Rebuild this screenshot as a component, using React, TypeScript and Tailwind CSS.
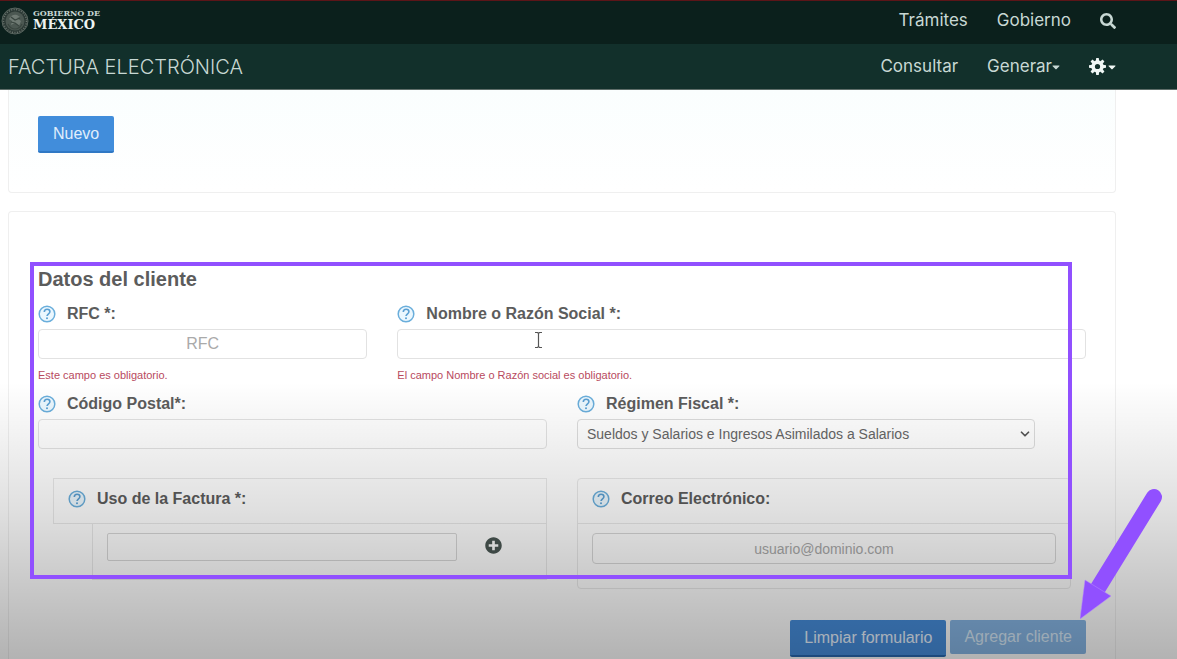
import React from 'react';
import { FaCaretDown, FaPlusCircle, FaSearch } from 'react-icons/fa';
import { ChevronDown } from 'lucide-react';

const teeth = [0, 45, 90, 135, 180, 225, 270, 315];

const GearIcon: React.FC = () => (
  <svg viewBox="0 0 24 24" className="w-[17px] h-[17px]" aria-hidden="true">
    <circle cx="12" cy="12" r="6.2" fill="none" stroke="currentColor" strokeWidth="5" />
    {teeth.map((angle) => (
      <path key={angle} d="M9.6 4.5 L10.2 0 H13.8 L14.4 4.5 Z" fill="currentColor" transform={`rotate(${angle} 12 12)`} />
    ))}
  </svg>
);

const HelpIcon: React.FC = () => (
  <svg viewBox="0 0 18 18" className="w-[18px] h-[18px] shrink-0" aria-hidden="true">
    <circle cx="9" cy="9" r="7.8" fill="#e2f4fd" fillOpacity="0.7" stroke="#6aaedb" strokeWidth="1.5" />
    <path d="M6.3 7c0-1.700 1.100-2.800 2.800-2.800s2.800 1 2.800 2.500c0 1.900-2.700 2.200-2.900 4.300" fill="none" stroke="#5a9fd2" strokeWidth="1.600" />
    <circle cx="9" cy="13.200" r="1" fill="#5a9fd2" />
  </svg>
);

const Seal: React.FC = () => (
  <svg viewBox="0 0 28 28" className="w-7 h-7" aria-hidden="true">
    <circle cx="14" cy="14" r="13" fill="#2c3935" stroke="#59655f" strokeWidth="1" />
    <circle cx="14" cy="14" r="11.500" fill="none" stroke="#6b766f" strokeWidth="1.5" strokeDasharray="1 1.500" />
    <circle cx="14" cy="14" r="9.500" fill="#4c5852" />
    <path d="M8 12c2-4 5-5 8-4l3 2-3 1 4 3-2 5-4-3-4 2 1-4-3-2z" fill="#6f7a73" />
    <path d="M7 17c2 4 5 5 7 5s5-1 7-5M10 10l4 3 5-2M10 15l4 1 4 3" fill="none" stroke="#39453f" strokeWidth="1.200" />
  </svg>
);

interface FieldLabelProps {
  htmlFor: string;
  children: React.ReactNode;
}

const FieldLabel: React.FC<FieldLabelProps> = ({ htmlFor, children }) => (
  <label htmlFor={htmlFor} className="flex items-center gap-[11px] h-[30px] text-base font-bold text-[#5c5c5c]">
    <HelpIcon />
    <span>{children}</span>
  </label>
);

const inputClass =
  'block w-full h-[30px] px-2.5 text-base text-[#666] text-center bg-white/40 border border-[#e2e2e2] rounded-sm placeholder:text-[#aaa]';

const App: React.FC = () => {
  return (
    <div className="relative flex flex-col min-h-screen bg-white font-['Liberation_Sans',Arial,sans-serif]">
      <header className="font-['Inter','Open_Sans',sans-serif] text-[17px] text-[#c8d8d4] border-b border-[#5f6e6a]">
        {/* Government bar */}
        <div className="flex items-center justify-between h-11 pl-px pr-[61px] pb-1 bg-[#0b201c] border-t border-[#5c1518]">
          <a href="#inicio" className="flex items-center gap-1 font-['DejaVu_Serif',serif] font-bold">
            <Seal />
            <span className="flex flex-col">
              <span className="text-[8px] leading-[9px]">GOBIERNO DE</span>
              <span className="text-[13px] leading-[14px] text-[#eef4f2]">MÉXICO</span>
            </span>
          </a>
          <nav className="flex items-center gap-[29px]">
            <a href="#tramites">Trámites</a>
            <a href="#gobierno">Gobierno</a>
            <button type="button" aria-label="Buscar">
              <FaSearch className="w-4 h-4" />
            </button>
          </nav>
        </div>

        {/* Application bar */}
        <div className="flex items-center justify-between h-[45px] pl-2 pr-[61px] bg-[#12302b]">
          <h1 className="text-xl font-light">FACTURA ELECTRÓNICA</h1>
          <nav className="flex items-center gap-[29px]">
            <a href="#consultar">Consultar</a>
            <button type="button" className="flex items-center">
              Generar
              <FaCaretDown className="w-2 h-3" />
            </button>
            <button type="button" aria-label="Ajustes" className="flex items-center gap-0.5 text-[#f0f7f5]">
              <GearIcon />
              <FaCaretDown className="w-2 h-3" />
            </button>
          </nav>
        </div>
      </header>

      <main className="flex flex-col flex-1 gap-[18px] pl-2 pr-[61px]">
        <section className="px-[29px] pt-[26px] pb-[39px] border border-t-0 border-[#efefef] rounded-b bg-linear-to-b from-[#fafefe] to-white">
          <button type="button" className="h-[37px] px-[15px] text-base text-[#e0eefc] bg-[#418ddb] border-b-2 border-[#2f78c4] rounded-xs">
            Nuevo
          </button>
        </section>

        <section className="flex-1 px-[29px] pt-[55px] pb-0.5 border border-b-0 border-[#efefef] rounded-t">
          <form className="relative">
            <h2 className="h-8 text-xl leading-6 font-bold text-[#5c5c5c]">Datos del cliente</h2>

            <div className="grid grid-cols-12 gap-x-[30px]">
              <div className="col-span-4">
                <FieldLabel htmlFor="rfc">RFC *:</FieldLabel>
                <input id="rfc" type="text" placeholder="RFC" className={inputClass} />
                <p className="h-[30px] text-[11px] leading-8 text-[#b84a5e]">Este campo es obligatorio.</p>
              </div>
              <div className="col-span-8">
                <FieldLabel htmlFor="nombre">Nombre o Razón Social *:</FieldLabel>
                <div className="relative">
                  <input id="nombre" type="text" className={inputClass} />
                  {/* Text cursor */}
                  <svg viewBox="0 0 9 18" className="absolute left-[137px] top-0.5 w-[9px] h-[18px]" aria-hidden="true">
                    <path d="M1 1.500h2.500l1 1 1-1H8M4.500 2v14M1 16.500h2.500l1-1 1 1H8" fill="none" stroke="#555" strokeWidth="1.200" />
                  </svg>
                </div>
                <p className="h-[30px] text-[11px] leading-8 text-[#b84a5e]">
                  El campo Nombre o Razón social es obligatorio.
                </p>
              </div>

              <div className="col-span-6">
                <FieldLabel htmlFor="codigo-postal">Código Postal*:</FieldLabel>
                <input id="codigo-postal" type="text" className={inputClass} />
              </div>
              <div className="col-span-6">
                <FieldLabel htmlFor="regimen">Régimen Fiscal *:</FieldLabel>
                <div className="relative w-9/10">
                  <select
                    id="regimen"
                    className="block w-full h-[30px] px-[9px] text-sm text-[#666] bg-white/40 border border-[#dcdcdc] rounded-sm appearance-none"
                  >
                    <option>Sueldos y Salarios e Ingresos Asimilados a Salarios</option>
                  </select>
                  <ChevronDown className="absolute right-[3px] top-2 w-3.5 h-3.5 text-[#555] pointer-events-none" strokeWidth={3} />
                </div>
              </div>
            </div>

            <div className="grid grid-cols-2 gap-x-[30px] pt-[29px]">
              {/* Invoice use */}
              <div className="flex flex-col ml-[15px] h-[102px] border-r border-[#e9e9e9]">
                <div className="px-3.5 pt-[5px] pb-[9px] border border-r-0 border-[#e9e9e9]">
                  <FieldLabel htmlFor="uso">Uso de la Factura *:</FieldLabel>
                </div>
                <div className="flex flex-1 items-start ml-[39px] pl-3.5 pt-[9px] border-l border-b border-[#e9e9e9]">
                  <input id="uso" type="text" className="w-[350px] h-7 px-2 bg-transparent border border-[#d8d8d8] rounded-xs" />
                  <button type="button" aria-label="Agregar uso" className="ml-7 mt-1">
                    <FaPlusCircle className="w-[17px] h-[17px] text-[#4a5753]" />
                  </button>
                </div>
              </div>

              {/* Email */}
              <div className="mr-[15px] h-[111px] border border-[#e9e9e9] rounded-sm">
                <div className="px-3.5 pt-[5px] pb-[9px] border-b border-[#e9e9e9]">
                  <FieldLabel htmlFor="correo">Correo Electrónico:</FieldLabel>
                </div>
                <div className="px-3.5 pt-[9px]">
                  <input
                    id="correo"
                    type="email"
                    placeholder="usuario@dominio.com"
                    className="block w-full h-[31px] px-2.5 text-sm text-center bg-transparent border border-[#d8d8d8] rounded-sm placeholder:text-[#aaa]"
                  />
                </div>
              </div>
            </div>

            <div className="flex items-start justify-end gap-1 pt-[31px]">
              <button type="button" className="h-[37px] px-3.5 text-base text-[#e8f3ff] bg-[#468ddb] border-b-2 border-[#2868b0] rounded-xs">
                Limpiar formulario
              </button>
              <button type="button" className="h-[34px] px-3.5 text-base text-[#d7e9f8] bg-[#86b5e4] rounded-xs">
                Agregar cliente
              </button>
            </div>

            {/* Annotations */}
            <div className="absolute z-20 -left-2 right-3.5 -top-[5px] bottom-[78px] border-4 border-[#9150ff] pointer-events-none" />
            <svg viewBox="0 0 83 132" className="absolute z-20 -right-[77px] bottom-[37px] w-[83px] h-[132px] pointer-events-none" aria-hidden="true">
              <path d="M74 9 L18 100" stroke="#9150ff" strokeWidth="16" strokeLinecap="round" />
              <path d="M0 131 L5 92 L31 108 Z" fill="#9150ff" stroke="#b78bff" strokeWidth="0.500" />
            </svg>
          </form>
        </section>
      </main>

      {/* Bottom shade */}
      <div className="absolute z-10 inset-x-0 bottom-0 h-[42%] pointer-events-none bg-linear-to-b from-black/0 via-black/12 via-45% to-black/30" />
    </div>
  );
};

export default App;
